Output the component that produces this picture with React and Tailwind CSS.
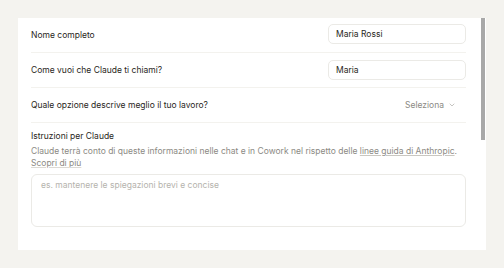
import { ChevronDown } from 'lucide-react';

function Row({ label, children }) {
  return (
    <div className="flex items-center justify-between h-[35px] border-b border-[#f3f2ee]">
      <span className="text-[#29261b]">{label}</span>
      {children}
    </div>
  );
}

export default function App() {
  return (
    <div
      className="w-[504px] h-[268px] bg-[#f4f3ef] pt-[18px] pl-[18px] text-[8.5px] overflow-hidden"
      style={{ fontFamily: 'Inter, "Noto Sans", sans-serif' }}
    >
      <div className="relative w-[468px] h-[232px] bg-white pl-[13px] pr-[20px]">
        {/* Scrollbar */}
        <div className="absolute right-[1px] top-0 w-[4px] h-[122px] bg-[#a8a8a8]" />

        <Row label="Nome completo">
          <div className="w-[138px] h-[20px] border border-[#ebeae6] rounded-[5px] flex items-center px-[7px] text-[#29261b] mt-[-2px]">
            Maria Rossi
          </div>
        </Row>
        <Row label="Come vuoi che Claude ti chiami?">
          <div className="w-[138px] h-[20px] border border-[#ebeae6] rounded-[5px] flex items-center px-[7px] text-[#29261b]">
            Maria
          </div>
        </Row>
        <Row label="Quale opzione descrive meglio il tuo lavoro?">
          <div className="flex items-center gap-[4px] text-[#8c8a84] pr-[10px]">
            <span>Seleziona</span>
            <ChevronDown size={8} strokeWidth={1.5} />
          </div>
        </Row>

        <div className="pt-[7px]">
          <div className="text-[#29261b]">Istruzioni per Claude</div>
          <p className="mt-[2px] text-[#8c8a84] leading-[12px]">
            Claude terrà conto di queste informazioni nelle chat e in Cowork nel rispetto delle{' '}
            <span className="underline decoration-[#c9c7c1]">linee guida di Anthropic</span>.
            <br />
            <span className="underline decoration-[#dcdad4]">Scopri di più</span>
          </p>
          <div className="mt-[5px] h-[53px] border border-[#ebeae6] rounded-[6px] px-[9px] py-[4px] text-[#b5b3ad]">
            es. mantenere le spiegazioni brevi e concise
          </div>
        </div>
      </div>
    </div>
  );
}
